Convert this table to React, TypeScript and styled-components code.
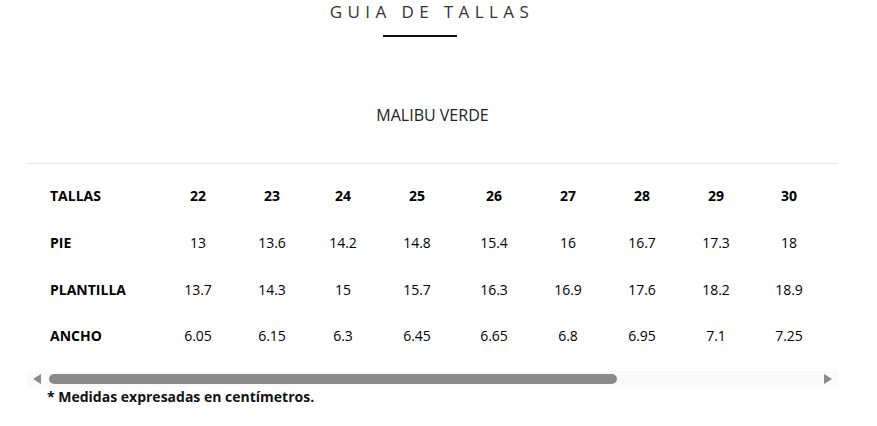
import React from "react";
import styled, { createGlobalStyle } from "styled-components";

const Global = createGlobalStyle`
  html, body { margin: 0; padding: 0; background: #fff; }
  body { font-family: "Open Sans", "Liberation Sans", sans-serif; color: #111; }
`;

const Page = styled.div`
  width: 811px;
  margin-left: 27px;
  display: flex;
  flex-direction: column;
`;

const Header = styled.header`
  display: flex;
  flex-direction: column;
  align-items: center;
`;

const Title = styled.h1`
  margin: 0;
  padding-right: 1px;
  font-size: 17px;
  line-height: 24px;
  font-weight: 500;
  letter-spacing: 5.4px;
  color: #333;
`;

const Underline = styled.div`
  width: 74px;
  height: 1.5px;
  background: #111;
  margin-top: 11px;
  margin-right: 25px;
`;

const Product = styled.h2`
  margin: 67px 0 0;
  font-size: 16px;
  line-height: 22px;
  font-weight: 400;
  color: #222;
`;

const Rule = styled.hr`
  margin: 37px 0 0;
  border: none;
  border-top: 1px solid #e3e3e3;
  width: 100%;
`;

const Scroller = styled.div`
  overflow: hidden;
  width: 100%;
`;

const Table = styled.table`
  border-collapse: collapse;
  margin-top: 9px;
  table-layout: fixed;
`;

const Row = styled.tr`
  height: 46.7px;
`;

const LabelCell = styled.th`
  width: 111px;
  padding: 0 0 0 23px;
  text-align: left;
  font-size: 14px;
  font-weight: 700;
  color: #000;
`;

const Cell = styled.td<{ $bold?: boolean; $w: number }>`
  width: ${(p) => p.$w}px;
  padding: 0;
  text-align: center;
  font-size: 14px;
  font-weight: ${(p) => (p.$bold ? 700 : 400)};
  color: #000;
`;

const Bar = styled.div`
  margin-top: 12px;
  height: 16px;
  background: #fafafa;
  display: flex;
  align-items: center;
  padding: 0 6px;
  gap: 8px;
`;

const ArrowLeft = styled.div`
  width: 0;
  height: 0;
  border-top: 5px solid transparent;
  border-bottom: 5px solid transparent;
  border-right: 8px solid #8a8a8a;
`;

const ArrowRight = styled.div`
  width: 0;
  height: 0;
  border-top: 5px solid transparent;
  border-bottom: 5px solid transparent;
  border-left: 8px solid #8a8a8a;
`;

const TrackArea = styled.div`
  flex: 1;
  display: flex;
  align-items: center;
`;

const Thumb = styled.div`
  height: 10px;
  border-radius: 5px;
  background: #8a8a8a;
`;

const Note = styled.p`
  margin: 0 0 0 20px;
  font-size: 14px;
  font-weight: 700;
  line-height: 20px;
  color: #111;
`;

const widths = [74, 74, 68, 80, 74, 74, 74, 74, 72];
const sizes = ["22", "23", "24", "25", "26", "27", "28", "29", "30"];
const rows: { label: string; values: string[] }[] = [
  { label: "PIE", values: ["13", "13.6", "14.2", "14.8", "15.4", "16", "16.7", "17.3", "18"] },
  { label: "PLANTILLA", values: ["13.7", "14.3", "15", "15.7", "16.3", "16.9", "17.6", "18.2", "18.9"] },
  { label: "ANCHO", values: ["6.05", "6.15", "6.3", "6.45", "6.65", "6.8", "6.95", "7.1", "7.25"] },
];

export default function App() {
  return (
    <>
      <Global />
      <Page>
        <Header>
          <Title>GUIA DE TALLAS</Title>
          <Underline />
          <Product>MALIBU VERDE</Product>
        </Header>
        <Rule />
        <Scroller>
          <Table>
            <tbody>
              <Row>
                <LabelCell>TALLAS</LabelCell>
                {sizes.map((s, i) => (
                  <Cell key={s} $bold $w={widths[i]}>
                    {s}
                  </Cell>
                ))}
              </Row>
              {rows.map((r) => (
                <Row key={r.label}>
                  <LabelCell>{r.label}</LabelCell>
                  {r.values.map((v, i) => (
                    <Cell key={i} $w={widths[i]}>
                      {v}
                    </Cell>
                  ))}
                </Row>
              ))}
            </tbody>
          </Table>
        </Scroller>
        <Bar>
          <ArrowLeft />
          <TrackArea>
            <Thumb style={{ width: "74%" }} />
          </TrackArea>
          <ArrowRight />
        </Bar>
        <Note>* Medidas expresadas en centímetros.</Note>
      </Page>
    </>
  );
}
